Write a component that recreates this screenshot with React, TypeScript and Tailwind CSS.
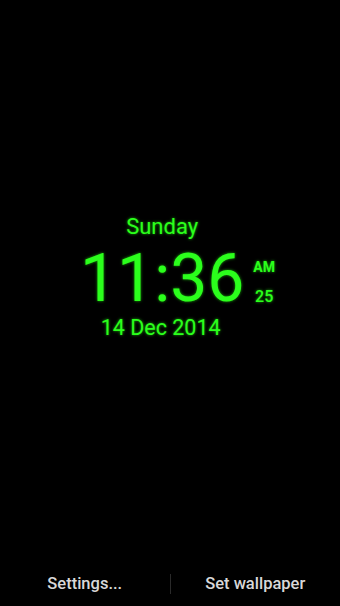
import React from 'react'

const green = "text-[#2bff1c] [text-shadow:0_0_3px_rgba(40,255,20,0.7)]"

const App = () => {
  return (
    <div className="w-[340px] h-[606px] bg-black flex flex-col font-['Roboto','Liberation_Sans',sans-serif]">
      <div className="flex-1 flex justify-center pt-[216px] pl-[15px]">
        <div className="flex flex-col items-center">
          <div className={`text-[22px] leading-none ${green}`}>Sunday</div>
          <div className={`text-[66px] leading-none mt-[8px] ${green}`}>11:36</div>
          <div className={`text-[21.5px] leading-none mt-[5px] -ml-[3px] ${green}`}>14 Dec 2014</div>
        </div>
        <div className="flex flex-col items-center ml-[9px] pt-[44px]">
          <div className={`text-[14px] font-bold leading-none ${green}`}>AM</div>
          <div className={`text-[16px] font-medium leading-none mt-[15px] ${green}`}>25</div>
        </div>
      </div>
      <div className="h-[44px] flex items-center">
        <div className="flex-1 text-center text-[16.5px] font-medium text-[#d8d8d8]">Settings...</div>
        <div className="w-px h-[20px] bg-[#2a2a2a]"></div>
        <div className="flex-1 text-center text-[16.5px] font-medium text-[#d8d8d8]">Set wallpaper</div>
      </div>
    </div>
  )
}

export default App
